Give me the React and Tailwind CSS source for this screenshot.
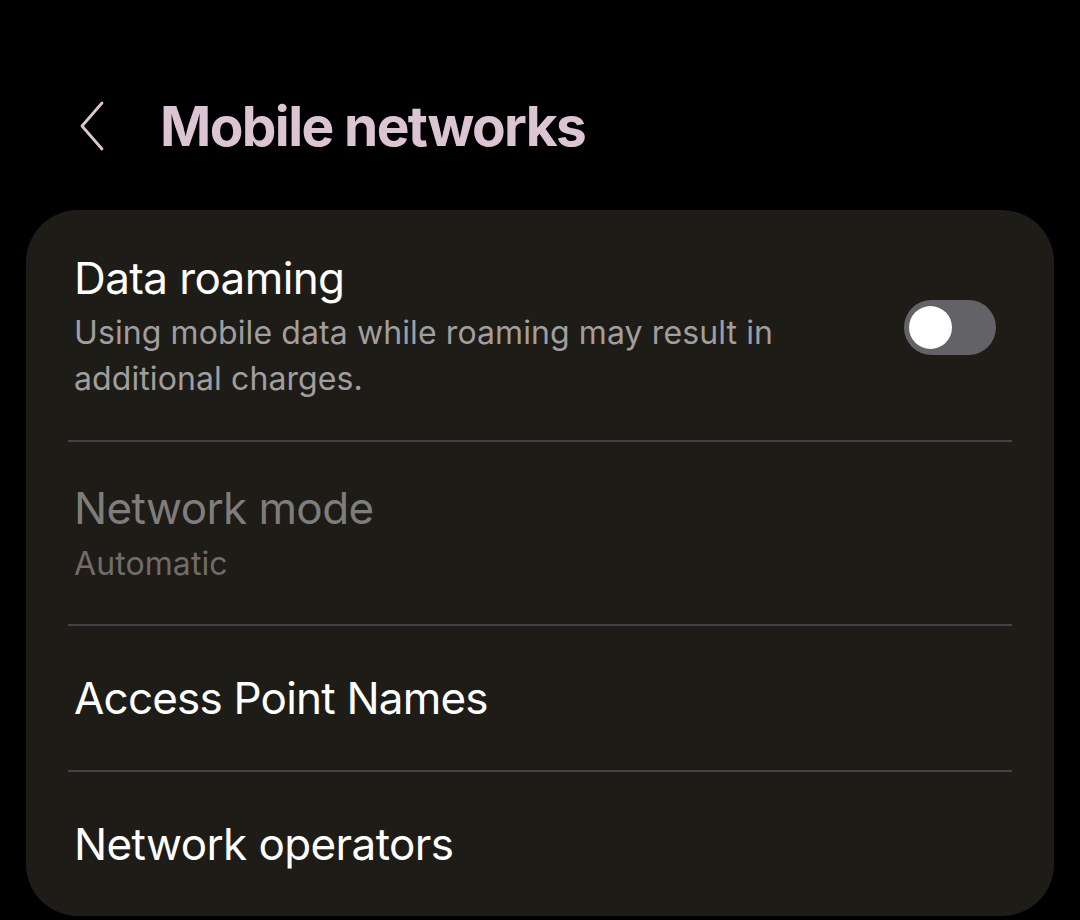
import { useState } from "react";

function BackIcon() {
  return (
    <svg width="26" height="50" viewBox="0 0 26 50" fill="none">
      <path
        d="M23 2 L3 25 L23 48"
        stroke="#dcc5d3"
        strokeWidth="2.8"
        strokeLinecap="round"
        strokeLinejoin="round"
      />
    </svg>
  );
}

function Toggle({ on, onChange }) {
  return (
    <button
      onClick={() => onChange(!on)}
      className="flex h-[55px] w-[92px] shrink-0 items-center rounded-full bg-[#636267] px-[5px]"
    >
      <span className="block h-[43px] w-[43px] rounded-full bg-white" />
    </button>
  );
}

function Divider() {
  return <div className="mx-[42px] h-[2px] bg-[#444246]" />;
}

export default function App() {
  const [roaming, setRoaming] = useState(false);

  return (
    <div
      className="min-h-[920px] bg-black"
      style={{ fontFamily: "Inter, Roboto, sans-serif" }}
    >
      {/* Header */}
      <div className="flex items-center pt-[94px] pl-[79px]">
        <BackIcon />
        <h1 className="ml-[55px] text-[55px] font-bold leading-[64px] tracking-[-1.6px] text-[#dcc5d3]">
          Mobile networks
        </h1>
      </div>

      {/* Settings card */}
      <div className="mx-[26px] mt-[52px] rounded-[52px] bg-[#1e1c17]">
        <div className="flex items-center pt-[42px] pb-[38px] pl-[48px] pr-[58px]">
          <div className="flex-1">
            <div className="text-[44px] leading-[52px] tracking-[-0.6px] text-white">
              Data roaming
            </div>
            <div className="mt-[6px] text-[32px] leading-[46px] tracking-[0.1px] text-[#a09e9f]">
              Using mobile data while roaming may result in
              <br />
              additional charges.
            </div>
          </div>
          <Toggle on={roaming} onChange={setRoaming} />
        </div>
        <Divider />
        <div className="pt-[40px] pb-[37px] pl-[48px]">
          <div className="text-[44px] leading-[52px] tracking-[-0.6px] text-[#7f7d7b]">
            Network mode
          </div>
          <div className="mt-[7px] text-[32px] leading-[46px] tracking-[0.1px] text-[#716c69]">
            Automatic
          </div>
        </div>
        <Divider />
        <div className="flex h-[144px] items-center pl-[48px] text-[44px] leading-[52px] tracking-[-0.8px] text-white">
          Access Point Names
        </div>
        <Divider />
        <div className="flex h-[144px] items-center pl-[48px] text-[44px] leading-[52px] tracking-[-0.6px] text-white">
          Network operators
        </div>
      </div>
    </div>
  );
}
